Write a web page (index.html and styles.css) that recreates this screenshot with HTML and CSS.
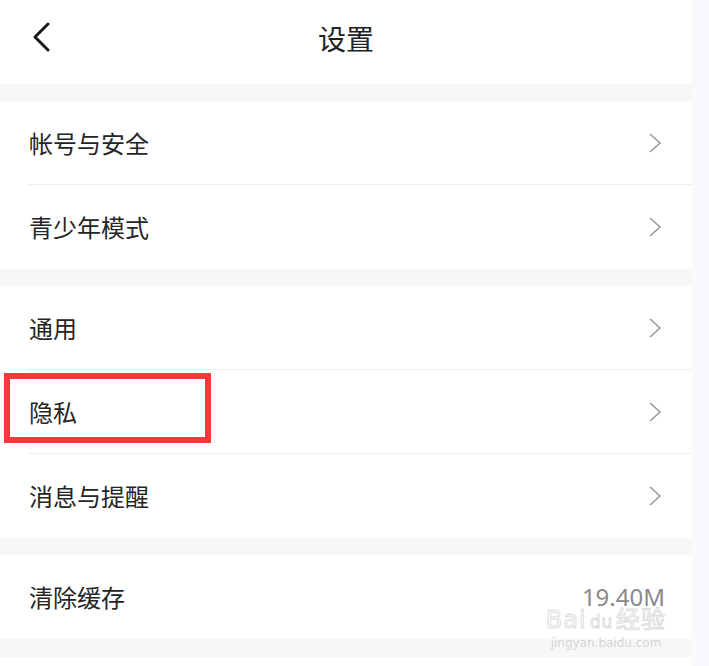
FILE: index.html
```html
<!DOCTYPE html>
<html lang="zh-CN">
<head>
<meta charset="utf-8">
<title>设置</title>
<link rel="stylesheet" href="styles.css">
</head>
<body>
<div class="page">
  <div class="main">
    <header class="header">
      <svg class="back" width="20" height="30" viewBox="0 0 20 30"><path d="M17 2 L4 15 L17 28" fill="none" stroke="#1a1a1a" stroke-width="3" stroke-linecap="round" stroke-linejoin="round"/></svg>
      <h1 class="title">设置</h1>
    </header>
    <div class="band"></div>
    <section class="group">
      <div class="row"><span class="label">帐号与安全</span><svg class="chev" width="14" height="22" viewBox="0 0 14 22"><path d="M2 2 L12 11 L2 20" fill="none" stroke="#999" stroke-width="1.6"/></svg></div>
      <div class="row"><span class="label">青少年模式</span><svg class="chev" width="14" height="22" viewBox="0 0 14 22"><path d="M2 2 L12 11 L2 20" fill="none" stroke="#999" stroke-width="1.6"/></svg></div>
    </section>
    <div class="band"></div>
    <section class="group">
      <div class="row"><span class="label">通用</span><svg class="chev" width="14" height="22" viewBox="0 0 14 22"><path d="M2 2 L12 11 L2 20" fill="none" stroke="#999" stroke-width="1.6"/></svg></div>
      <div class="row row-marked"><span class="label">隐私</span><svg class="chev" width="14" height="22" viewBox="0 0 14 22"><path d="M2 2 L12 11 L2 20" fill="none" stroke="#999" stroke-width="1.6"/></svg><div class="mark"></div></div>
      <div class="row"><span class="label">消息与提醒</span><svg class="chev" width="14" height="22" viewBox="0 0 14 22"><path d="M2 2 L12 11 L2 20" fill="none" stroke="#999" stroke-width="1.6"/></svg></div>
    </section>
    <div class="band"></div>
    <section class="group">
      <div class="row row-cache"><span class="label">清除缓存</span><span class="value">19.40M</span>
        <div class="watermark"><span class="wm-big">Bai<span class="wm-paw">du</span>经验</span><span class="wm-small">jingyan.baidu.com</span></div>
      </div>
    </section>
    <div class="band band-last"></div>
  </div>
  <div class="strip"></div>
</div>
</body>
</html>
```
FILE: styles.css
```css
html, body {
  margin: 0;
  padding: 0;
  background: #ffffff;
}
body {
  font-family: "Noto Sans CJK SC", "Noto Sans", sans-serif;
  color: #1a1a1a;
}
.page {
  display: flex;
  width: 709px;
  height: 666px;
  overflow: hidden;
}
.main {
  width: 692px;
  display: flex;
  flex-direction: column;
  background: #ffffff;
}
.strip {
  width: 17px;
  background: #f8f9fc;
}
.header {
  height: 84px;
  display: flex;
  align-items: center;
  justify-content: center;
  position: relative;
}
.back {
  position: absolute;
  left: 31px;
  top: 22px;
}
.title {
  margin: 0;
  font-size: 28px;
  font-weight: 400;
  color: #222222;
  line-height: 1;
  margin-top: -8px;
}
.band {
  height: 17px;
  background: #f7f7f7;
}
.band-last {
  height: 18px;
}
.group {
  display: flex;
  flex-direction: column;
}
.row {
  height: 84px;
  display: flex;
  align-items: center;
  justify-content: space-between;
  padding: 0 30px 0 29px;
  position: relative;
}
.row + .row::before {
  content: "";
  position: absolute;
  left: 28px;
  right: 0;
  top: -1px;
  height: 1px;
  background: #efefef;
}
.label {
  font-size: 24px;
  line-height: 1;
  color: #252525;
}
.chev {
  display: block;
}
.value {
  font-family: "Noto Sans", sans-serif;
  font-size: 24px;
  color: #8a8a8a;
  line-height: 1;
  margin-right: -3px;
}
.mark {
  position: absolute;
  left: 4px;
  top: 3px;
  width: 195px;
  height: 58px;
  border: 6px solid #f43a3d;
}
.watermark {
  position: absolute;
  left: 543px;
  top: 53px;
  width: 126px;
  display: flex;
  flex-direction: column;
  align-items: center;
  pointer-events: none;
}
.wm-big {
  font-family: "DejaVu Sans", sans-serif;
  font-size: 24px;
  line-height: 1;
  letter-spacing: 1px;
  -webkit-text-stroke: 1px rgba(190, 190, 190, 0.55);
  color: rgba(255, 255, 255, 0.5);
}
.wm-paw {
  font-size: 17px;
  margin: 0 3px;
}
.wm-small {
  font-family: "DejaVu Sans", sans-serif;
  font-size: 12px;
  line-height: 1;
  margin-top: 5px;
  color: rgba(205, 205, 205, 0.85);
}
```
